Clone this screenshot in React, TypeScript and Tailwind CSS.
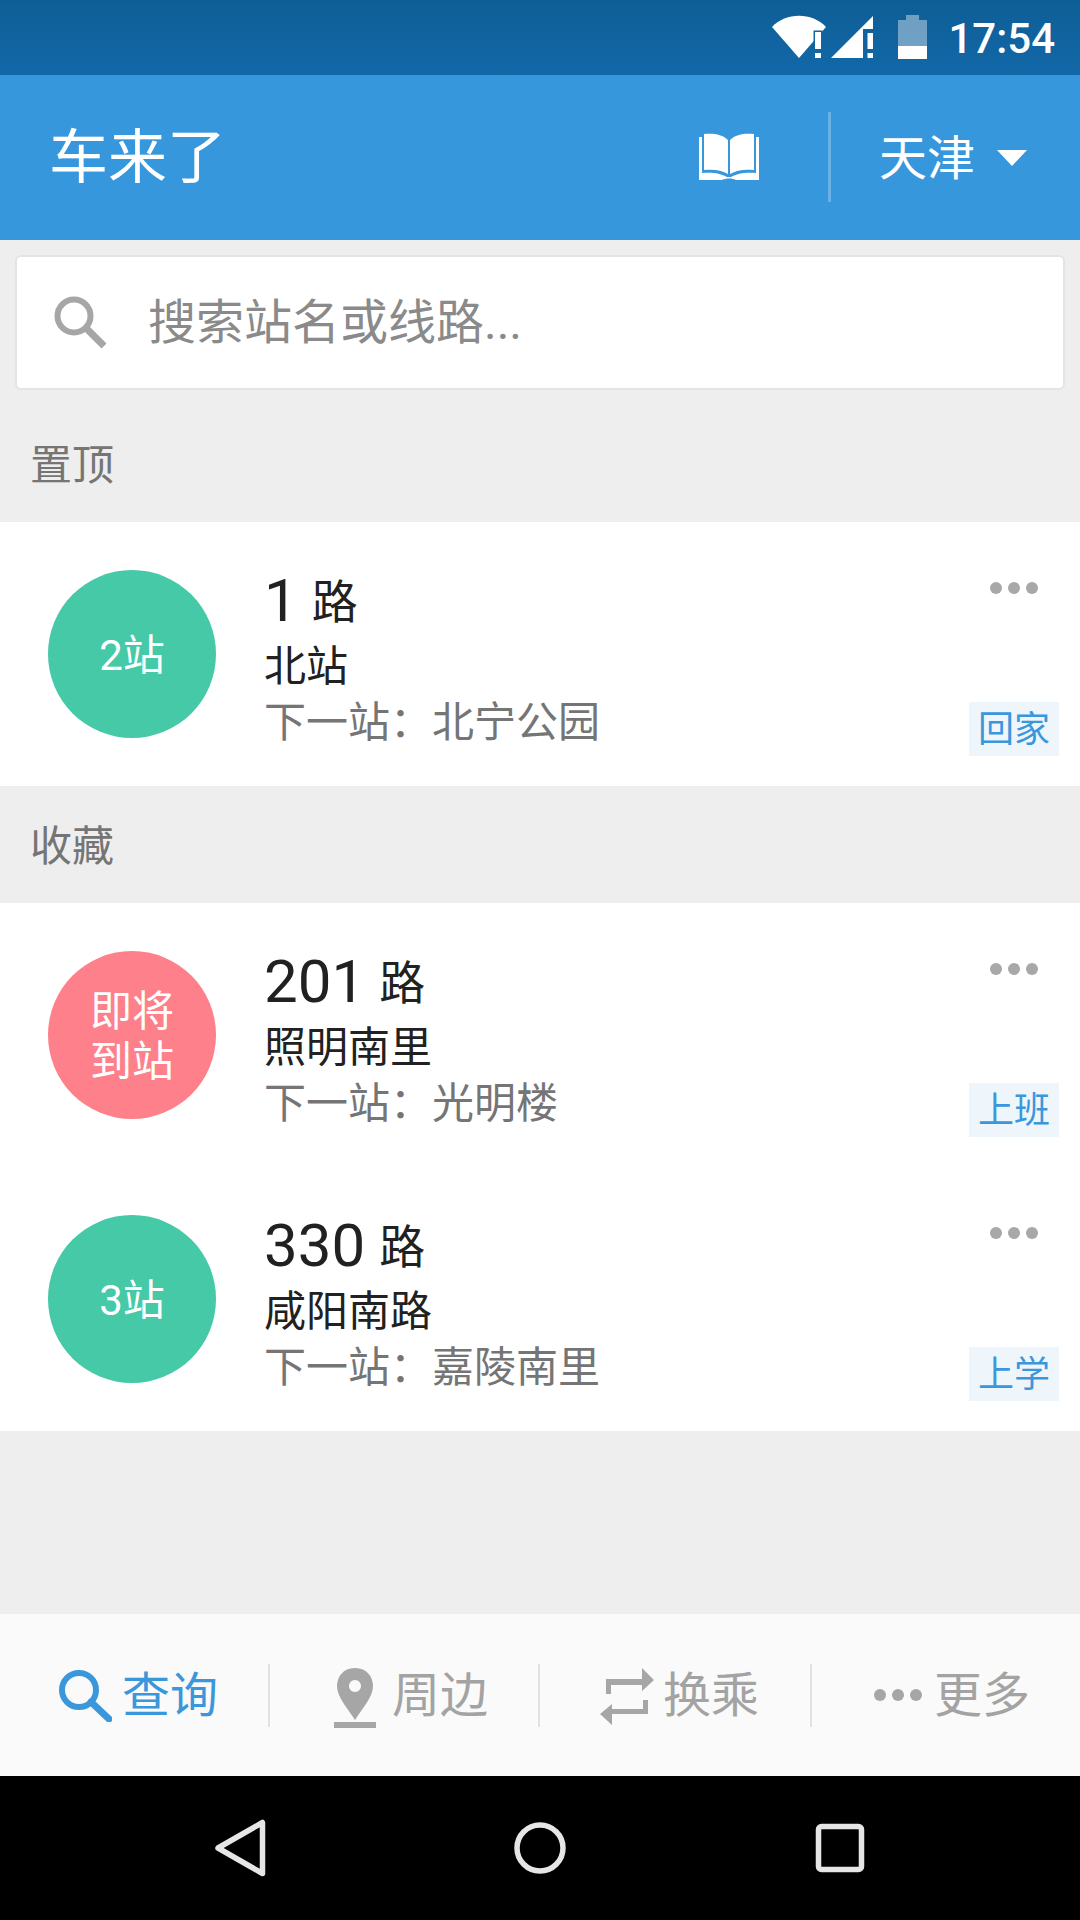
const font = '[font-family:Roboto,"Noto_Sans_CJK_SC",sans-serif]';

function SectionTitle({ children, cls }: { children: string; cls: string }) {
  return <div className={`${cls} flex items-center pl-[30px] text-[42px] leading-none text-[#757575]`}>{children}</div>;
}

function Dots({ color, size, gap }: { color: string; size: string; gap: string }) {
  return (
    <div className={`flex ${gap}`}>
      <span className={`${size} ${color} rounded-full`} />
      <span className={`${size} ${color} rounded-full`} />
      <span className={`${size} ${color} rounded-full`} />
    </div>
  );
}

function RouteRow({ badge, soon, num, dest, next, tag }: { badge: string; soon?: boolean; num: string; dest: string; next: string; tag: string }) {
  return (
    <div className="h-[264px] flex items-start bg-white pl-[48px] pr-[21px] pt-[48px]">
      <div className={`w-[168px] h-[168px] rounded-full shrink-0 flex items-center justify-center text-center text-white pt-[4px] ${soon ? 'bg-[#fd808a] text-[42px] leading-[50px]' : 'bg-[#45c9a7] text-[42px] leading-none'}`}>
        {soon ? <span>即将<br />到站</span> : badge}
      </div>
      <div className="ml-[48px] flex-1 flex flex-col">
        <div className="h-[66px] flex items-center text-[#212121] leading-none">
          <span className="text-[60px] mt-[-5px]">{num}</span>
          <span className="text-[46px] ml-[14px] mt-[-2px]">路</span>
        </div>
        <div className="h-[50px] flex items-center text-[42px] leading-none text-[#212121] mt-[6px]">{dest}</div>
        <div className="h-[58px] flex items-center text-[42px] leading-none text-[#757575] mt-[2px]">下一站：{next}</div>
      </div>
      <div className="h-[186px] flex flex-col items-end justify-between">
        <div className="pr-[21px] pt-[12px]"><Dots color="bg-[#a8a8a8]" size="w-[12px] h-[12px]" gap="gap-[6px]" /></div>
        <div className="w-[90px] h-[54px] flex items-center justify-center bg-[#eef6fc] text-[36px] leading-none text-[#3a97dc] pt-[2px]">{tag}</div>
      </div>
    </div>
  );
}

function NavItem({ icon, text, active, cls, last }: { icon: React.ReactNode; text: string; active?: boolean; cls: string; last?: boolean }) {
  return (
    <div className={`${cls} flex items-center`}>
      <div className={`flex-1 flex items-center text-[48px] leading-none ${active ? 'text-[#3a97dc]' : 'text-[#a3a3a3]'}`}>
        {icon}
        <span className="mt-[2px]">{text}</span>
      </div>
      {!last && <div className="w-[2px] h-[63px] bg-[#e2e2e2]" />}
    </div>
  );
}

export default function App() {
  return (
    <div className={`${font} w-[1080px] h-[1920px] flex flex-col bg-[#eeeeee] overflow-hidden`}>
      {/* status bar */}
      <div className="h-[75px] bg-[linear-gradient(#0e5e96,#1268a8)] flex items-center justify-end pr-[25px] text-white">
        <svg width="102" height="44" viewBox="0 0 102 44" className="mt-[-1px]">
          <path d="M0 12 C14 -3 40 -3 54 12 L27 43 Z" fill="#fff" />
          <path d="M43 17h6v17h-6z" fill="#fff" stroke="#1066a3" strokeWidth="3" paintOrder="stroke" />
          <path d="M43 38h6v5h-6z" fill="#fff" />
          <path d="M59 43 L101 1 V14 H91 V43 Z" fill="#fff" />
          <path d="M95.500 18h5.500v16h-5.500zM95.500 38h5.500v5h-5.500z" fill="#fff" />
        </svg>
        <svg width="29" height="44" viewBox="0 0 29 44" className="ml-[24px] mt-[-1px]">
          <path d="M0 5H8V0H21V5H29V44H0Z" fill="#fff" fillOpacity="0.4" />
          <rect y="31" width="29" height="13" fill="#fff" />
        </svg>
        <span className="ml-[21px] text-[42px] leading-none font-medium mt-[3px]">17:54</span>
      </div>
      {/* header */}
      <div className="h-[165px] bg-[#3797dd] flex items-center text-white">
        <div className="pl-[49px] text-[59px] leading-none flex-1">车来了</div>
        <svg width="60" height="48" viewBox="0 0 60 48" className="mt-[-4px]">
          <path d="M29 8 C23 2 14 1 5 2 V38 C14 37 23 38 29 42 Z M31 8 C37 2 46 1 55 2 V38 C46 37 37 38 31 42 Z" fill="#fff" />
          <path d="M0 5 H3 V41 C12 40 22 41 28 45 H32 C38 41 48 40 57 41 V5 H60 V48 H37 C33 46 27 46 23 48 H0 Z" fill="#fff" />
        </svg>
        <div className="w-[3px] h-[90px] bg-white/25 ml-[69px] mr-[-1px] mt-[-2px]" />
        <div className="ml-[49px] text-[48px] leading-none mt-[2px]">天津</div>
        <svg width="30" height="16" viewBox="0 0 30 16" className="ml-[22px] mr-[53px]">
          <path d="M0 0 H30 L15 16 Z" fill="#fff" />
        </svg>
      </div>
      {/* search */}
      <div className="mt-[15px] mx-[15px] h-[135px] bg-white border-2 border-[#e4e4e4] rounded-[6px] flex items-center">
        <svg width="54" height="54" viewBox="0 0 54 54" className="ml-[37px]">
          <circle cx="20" cy="20" r="16.500" fill="none" stroke="#a6a6a6" strokeWidth="6" />
          <path d="M32 32 L50 50" stroke="#a6a6a6" strokeWidth="7" fill="none" />
        </svg>
        <span className="ml-[40px] text-[48px] leading-none text-[#8a8a8a]">搜索站名或线路...</span>
      </div>
      <SectionTitle cls="h-[132px] pt-[20px]">置顶</SectionTitle>
      <RouteRow badge="2站" num="1" dest="北站" next="北宁公园" tag="回家" />
      <SectionTitle cls="h-[117px] pt-[4px]">收藏</SectionTitle>
      <RouteRow badge="" soon num="201" dest="照明南里" next="光明楼" tag="上班" />
      <RouteRow badge="3站" num="330" dest="咸阳南路" next="嘉陵南里" tag="上学" />
      <div className="h-[183px]" />
      {/* tabs */}
      <div className="h-[162px] bg-[#fafafa] flex items-center">
        <NavItem active text="查询" cls="w-[270px] pl-[59px]" icon={
          <svg width="53" height="52" viewBox="0 0 53 52" className="mr-[10px] mt-[1px]">
            <circle cx="20" cy="20" r="17" fill="none" stroke="#3a97dc" strokeWidth="6" />
            <path d="M32 32 L50 49" stroke="#3a97dc" strokeWidth="7" strokeLinecap="round" fill="none" />
          </svg>} />
        <NavItem text="周边" cls="w-[270px] pl-[64px]" icon={
          <svg width="42" height="60" viewBox="0 0 42 60" className="mr-[16px] mt-[6px]">
            <path fillRule="evenodd" d="M21 0 C33 0 39 9 39 18 C39 29 28 41 21 52 C14 41 3 29 3 18 C3 9 9 0 21 0 Z M21 12 a6 6 0 1 0 0.010 0 Z" fill="#a6a6a6" />
            <rect y="54" width="42" height="6" fill="#a6a6a6" />
          </svg>} />
        <NavItem text="换乘" cls="w-[272px] pl-[60px]" icon={
          <svg width="54" height="60" viewBox="0 0 54 60" className="mr-[9px] mt-[4px]">
            <path d="M6 12 H42 V1 L54 13 L42 24 V18 H11 V27 H6 Z" fill="#a6a6a6" />
            <path d="M48 33 V47 H12 V58 L0 47 L12 37 V42 H43 V33 Z" fill="#a6a6a6" />
          </svg>} />
        <NavItem last text="更多" cls="flex-1 pl-[62px]" icon={
          <div className="mr-[12px]"><Dots color="bg-[#a6a6a6]" size="w-[12px] h-[12px]" gap="gap-[6px]" /></div>} />
      </div>
      {/* nav bar */}
      <div className="h-[144px] bg-black flex items-center relative">
        <svg width="1080" height="144" viewBox="0 0 1080 144">
          <path d="M262.500 46.500 V97.500 L218 72 Z" fill="none" stroke="#e6e6e6" strokeWidth="5.500" strokeLinejoin="round" />
          <circle cx="540" cy="72" r="23" fill="none" stroke="#e6e6e6" strokeWidth="5.500" />
          <rect x="818.500" y="50.500" width="43" height="43" rx="3" fill="none" stroke="#e6e6e6" strokeWidth="5.500" />
        </svg>
      </div>
    </div>
  );
}
